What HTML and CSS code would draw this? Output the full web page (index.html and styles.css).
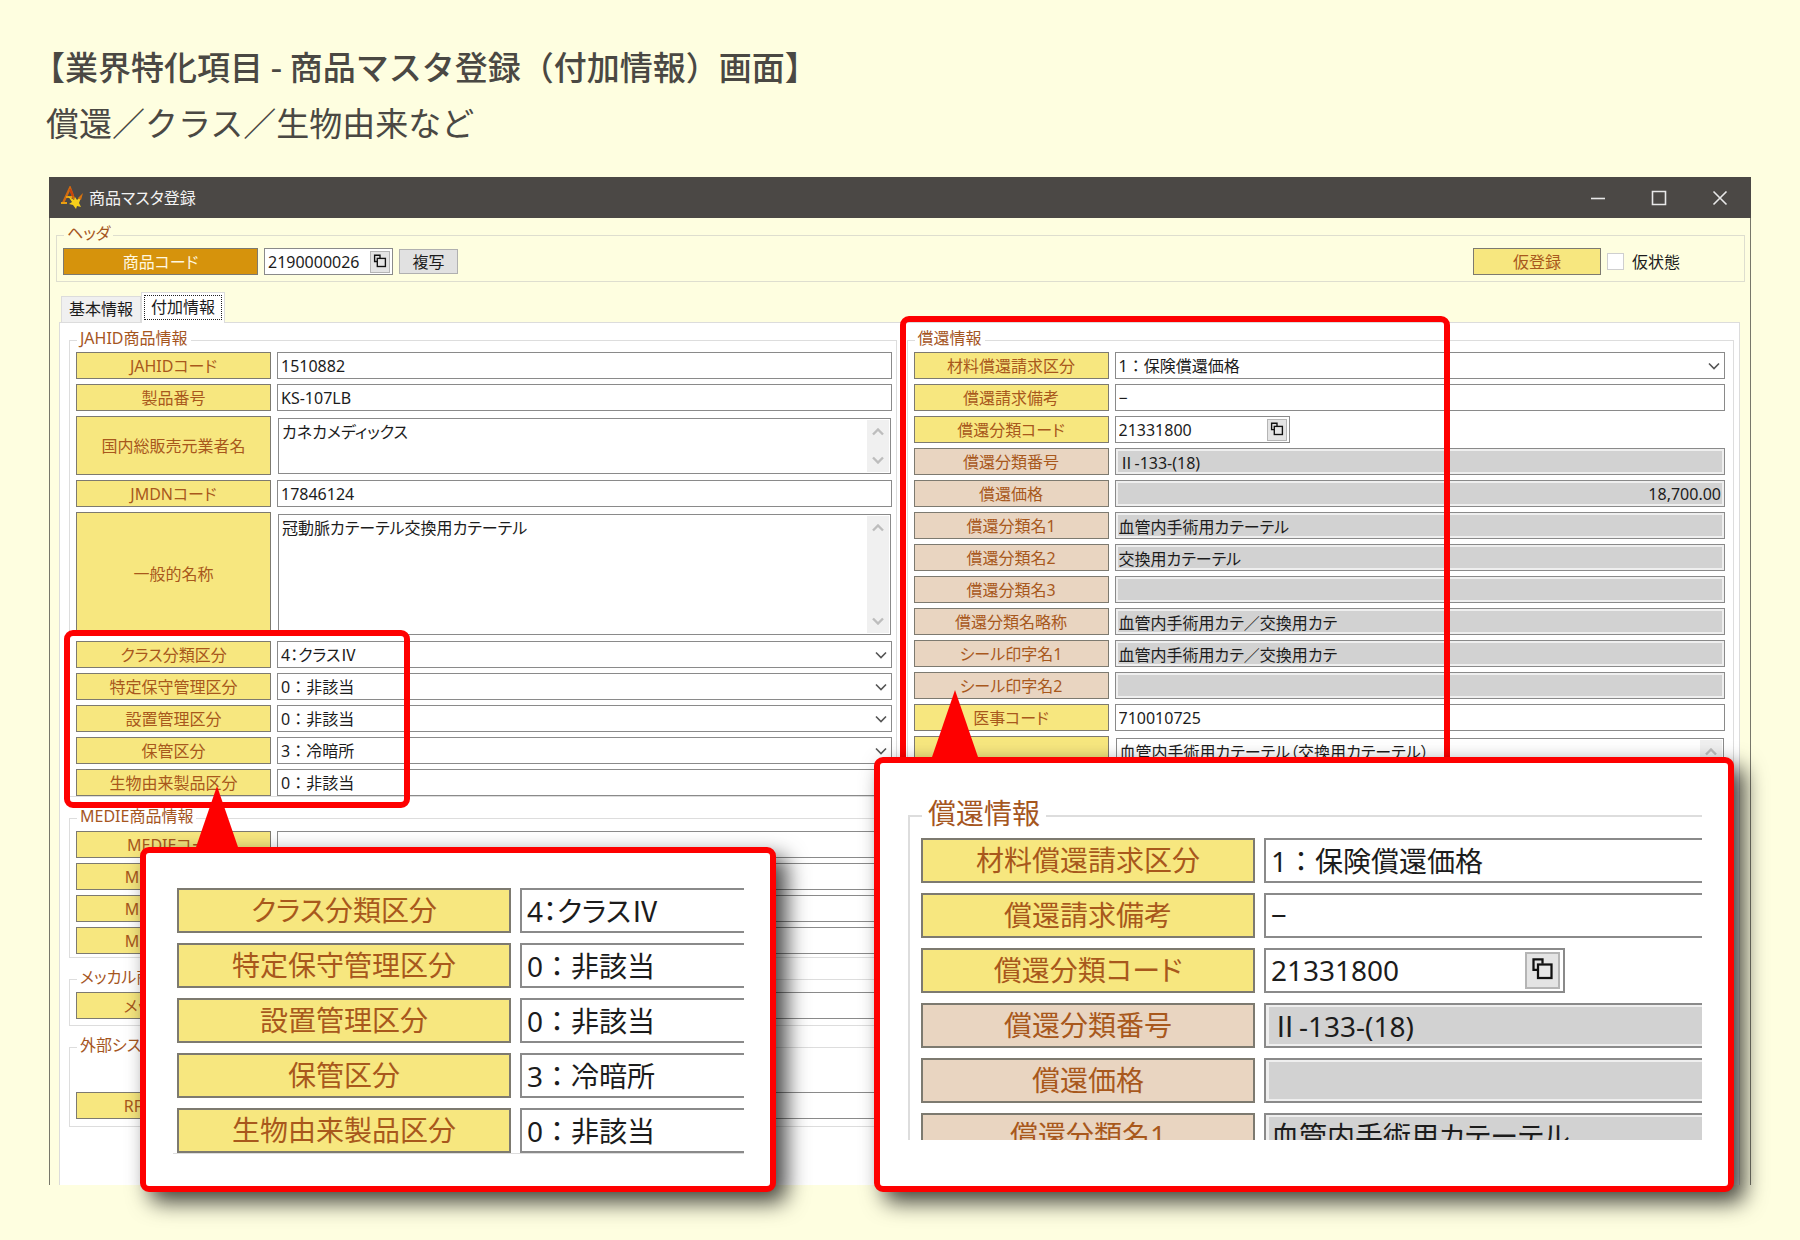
FILE: index.html
```html
<!DOCTYPE html>
<html lang="ja">
<head>
    <meta charset="UTF-8">
    <meta name="viewport" content="width=device-width, initial-scale=1.0">
    <title>商品マスタ登録</title>
    <link rel="stylesheet" href="styles.css">
</head>
<body>

<!-- Shared icons -->
<svg class="defs" width="0" height="0">
    <symbol id="chevron" viewBox="0 0 12 8"><path d="M1 1.5l5 5 5-5" fill="none" stroke="currentColor" stroke-width="1.6"/></symbol>
    <symbol id="chevron-up" viewBox="0 0 12 8"><path d="M1 6.5l5-5 5 5" fill="none" stroke="currentColor" stroke-width="2.4"/></symbol>
    <symbol id="chevron-down" viewBox="0 0 12 8"><path d="M1 1.5l5 5 5-5" fill="none" stroke="currentColor" stroke-width="2.4"/></symbol>
    <symbol id="lookup" viewBox="0 0 20 22"><path d="M4 8.5v-5h6v3M4 8.5v2h3" fill="none" stroke="#111" stroke-width="1.5"/><rect x="7" y="7" width="9" height="9" fill="#e6e6e6" stroke="#111" stroke-width="1.5"/></symbol>
</svg>

<header class="heading">
    <h1>【業界特化項目 - 商品マスタ登録（付加情報）画面】</h1>
    <p>償還／クラス／生物由来など</p>
</header>

<main class="window">
    <div class="titlebar">
        <svg class="app-icon" width="22" height="24" viewBox="0 0 22 24">
            <path d="M2 17L9 2l4 11" fill="none" stroke="#d06a10" stroke-width="2.4"/>
            <path d="M0 17h6M5 11h6" stroke="#e8a012" stroke-width="2.2"/>
            <path d="M9 3l3 7" stroke="#c8420c" stroke-width="2"/>
            <path d="M7 10l6 4 1-3 2 3 5-5-3 8 2 4-4-1-1 3-3-4-4-1 3-2z" fill="#f6cf1a"/>
            <path d="M17 12l5-5-2 7z" fill="#d8720e"/>
        </svg>
        <span class="title">商品マスタ登録</span>
        <div class="window-buttons">
            <button type="button" aria-label="最小化"><svg width="16" height="16" viewBox="0 0 16 16"><path d="M1 8.5h14"/></svg></button>
            <button type="button" aria-label="最大化"><svg width="16" height="16" viewBox="0 0 16 16"><path d="M1.5 1.5h13v13h-13z"/></svg></button>
            <button type="button" aria-label="閉じる"><svg width="16" height="16" viewBox="0 0 16 16"><path d="M1.5 1.5l13 13M14.5 1.5l-13 13"/></svg></button>
        </div>
    </div>

    <div class="window-body">
        <fieldset class="group header-group">
            <legend>ヘッダ</legend>
            <div class="header-row">
                <label class="tag key" for="code">商品コード</label>
                <div class="lookup">
                    <input id="code" type="text" value="2190000026">
                    <button type="button" aria-label="検索"><svg><use href="#lookup"/></svg></button>
                </div>
                <button type="button" class="copy-btn">複写</button>
                <label class="tag temp" for="temp">仮登録</label>
                <input id="temp" class="check" type="checkbox">
                <label class="check-label" for="temp">仮状態</label>
            </div>
        </fieldset>

        <div class="tabs">
            <button type="button" class="tab">基本情報</button>
            <button type="button" class="tab active"><span>付加情報</span></button>
        </div>

        <div class="panel">
            <!-- Left column -->
            <div class="column">
                <fieldset class="group">
                    <legend>JAHID商品情報</legend>
                    <div class="row"><label class="tag" for="jahid">JAHIDコード</label><input id="jahid" type="text" value="1510882"></div>
                    <div class="row"><label class="tag" for="product-no">製品番号</label><input id="product-no" type="text" value="KS-107LB"></div>
                    <div class="row medium">
                        <label class="tag" for="maker">国内総販売元業者名</label>
                        <div class="area">
                            <textarea id="maker">カネカメディックス</textarea>
                            <div class="scroll"><svg><use href="#chevron-up"/></svg><svg><use href="#chevron-down"/></svg></div>
                        </div>
                    </div>
                    <div class="row"><label class="tag" for="jmdn">JMDNコード</label><input id="jmdn" type="text" value="17846124"></div>
                    <div class="row tall">
                        <label class="tag" for="general">一般的名称</label>
                        <div class="area">
                            <textarea id="general">冠動脈カテーテル交換用カテーテル</textarea>
                            <div class="scroll"><svg><use href="#chevron-up"/></svg><svg><use href="#chevron-down"/></svg></div>
                        </div>
                    </div>
                    <div class="row"><label class="tag" for="class">クラス分類区分</label><div class="select kana"><select id="class"><option>4：クラスⅣ</option></select><svg><use href="#chevron"/></svg></div></div>
                    <div class="row"><label class="tag" for="upkeep">特定保守管理区分</label><div class="select"><select id="upkeep"><option>0：非該当</option></select><svg><use href="#chevron"/></svg></div></div>
                    <div class="row"><label class="tag" for="install">設置管理区分</label><div class="select"><select id="install"><option>0：非該当</option></select><svg><use href="#chevron"/></svg></div></div>
                    <div class="row"><label class="tag" for="storage">保管区分</label><div class="select"><select id="storage"><option>3：冷暗所</option></select><svg><use href="#chevron"/></svg></div></div>
                    <div class="row"><label class="tag" for="bio">生物由来製品区分</label><div class="select"><select id="bio"><option>0：非該当</option></select><svg><use href="#chevron"/></svg></div></div>
                </fieldset>

                <fieldset class="group medie">
                    <legend>MEDIE商品情報</legend>
                    <div class="row"><label class="tag" for="medie1">MEDIEコード</label><input id="medie1" type="text"></div>
                    <div class="row"><label class="tag" for="medie2">MEDIE商品名</label><input id="medie2" type="text"></div>
                    <div class="row"><label class="tag" for="medie3">MEDIE規格名</label><input id="medie3" type="text"></div>
                    <div class="row"><label class="tag" for="medie4">MEDIE分類名</label><input id="medie4" type="text"></div>
                </fieldset>

                <fieldset class="group meccul">
                    <legend>メッカル商品情報</legend>
                    <div class="row"><label class="tag" for="meccul">メッカルコード</label><input id="meccul" type="text"></div>
                </fieldset>

                <fieldset class="group external">
                    <legend>外部システム連携</legend>
                    <div class="row"><label class="tag" for="rfid">RFID管理区分</label><input id="rfid" type="text"></div>
                </fieldset>

                <div class="frame frame-class"></div>
            </div>

            <!-- Right column -->
            <div class="column">
                <fieldset class="group refund">
                    <legend>償還情報</legend>
                    <div class="row"><label class="tag" for="claim">材料償還請求区分</label><div class="select"><select id="claim"><option>1：保険償還価格</option></select><svg><use href="#chevron"/></svg></div></div>
                    <div class="row"><label class="tag" for="note">償還請求備考</label><input id="note" type="text" value="−"></div>
                    <div class="row">
                        <label class="tag" for="refund-code">償還分類コード</label>
                        <div class="lookup wide">
                            <input id="refund-code" type="text" value="21331800">
                            <button type="button" aria-label="検索"><svg><use href="#lookup"/></svg></button>
                        </div>
                    </div>
                    <div class="row"><label class="tag fixed" for="refund-no">償還分類番号</label><input id="refund-no" type="text" value="Ⅱ-133-(18)" readonly></div>
                    <div class="row"><label class="tag fixed" for="price">償還価格</label><input id="price" class="number" type="text" value="18,700.00" readonly></div>
                    <div class="row"><label class="tag fixed" for="name1">償還分類名1</label><input id="name1" type="text" value="血管内手術用カテーテル" readonly></div>
                    <div class="row"><label class="tag fixed" for="name2">償還分類名2</label><input id="name2" type="text" value="交換用カテーテル" readonly></div>
                    <div class="row"><label class="tag fixed" for="name3">償還分類名3</label><input id="name3" type="text" readonly></div>
                    <div class="row"><label class="tag fixed" for="short">償還分類名略称</label><input id="short" type="text" value="血管内手術用カテ／交換用カテ" readonly></div>
                    <div class="row"><label class="tag fixed" for="seal1">シール印字名1</label><input id="seal1" type="text" value="血管内手術用カテ／交換用カテ" readonly></div>
                    <div class="row"><label class="tag fixed" for="seal2">シール印字名2</label><input id="seal2" type="text" readonly></div>
                    <div class="row"><label class="tag" for="medical">医事コード</label><input id="medical" type="text" value="710010725"></div>
                    <div class="row tall">
                        <label class="tag" for="medical-name">医事名称</label>
                        <div class="area">
                            <textarea id="medical-name">血管内手術用カテーテル（交換用カテーテル）</textarea>
                            <div class="scroll"><svg><use href="#chevron-up"/></svg><svg><use href="#chevron-down"/></svg></div>
                        </div>
                    </div>
                </fieldset>

                <div class="frame frame-refund"></div>
            </div>
        </div>
    </div>

    <!-- Enlarged callouts -->
    <section class="callout callout-class">
        <div class="crop">
            <div class="row"><label class="tag" for="z-class">クラス分類区分</label><input id="z-class" class="kana" type="text" value="4：クラスⅣ"></div>
            <div class="row"><label class="tag" for="z-upkeep">特定保守管理区分</label><input id="z-upkeep" type="text" value="0：非該当"></div>
            <div class="row"><label class="tag" for="z-install">設置管理区分</label><input id="z-install" type="text" value="0：非該当"></div>
            <div class="row"><label class="tag" for="z-storage">保管区分</label><input id="z-storage" type="text" value="3：冷暗所"></div>
            <div class="row"><label class="tag" for="z-bio">生物由来製品区分</label><input id="z-bio" type="text" value="0：非該当"></div>
        </div>
    </section>

    <section class="callout callout-refund">
        <div class="crop">
            <fieldset class="group">
                <legend>償還情報</legend>
                <div class="row"><label class="tag" for="z-claim">材料償還請求区分</label><input id="z-claim" type="text" value="1：保険償還価格"></div>
                <div class="row"><label class="tag" for="z-note">償還請求備考</label><input id="z-note" type="text" value="−"></div>
                <div class="row">
                    <label class="tag" for="z-code">償還分類コード</label>
                    <div class="lookup">
                        <input id="z-code" type="text" value="21331800">
                        <button type="button" aria-label="検索"><svg><use href="#lookup"/></svg></button>
                    </div>
                </div>
                <div class="row"><label class="tag fixed" for="z-no">償還分類番号</label><input id="z-no" type="text" value="Ⅱ-133-(18)" readonly></div>
                <div class="row"><label class="tag fixed" for="z-price">償還価格</label><input id="z-price" type="text" readonly></div>
                <div class="row"><label class="tag fixed" for="z-name1">償還分類名1</label><input id="z-name1" type="text" value="血管内手術用カテーテル" readonly></div>
            </fieldset>
        </div>
    </section>
</main>

</body>
</html>
```

FILE: styles.css
```css
* {
    box-sizing: border-box;
}

body {
    margin: 0;
    padding: 43px 49px 56px;
    background-color: #fefee0;
    color: #1c1c1c;
    font-family: "Noto Sans", "Noto Sans CJK JP", sans-serif;
    font-size: 16px;
    line-height: 22px;
}

.defs {
    position: absolute;
}

input,
select,
textarea,
button {
    margin: 0;
    border: 0;
    border-radius: 0;
    padding: 0;
    background: none;
    color: inherit;
    font: inherit;
}

/* Heading */
.heading {
    margin-left: -17px;
    color: #4a4843;
    font-family: "Noto Sans CJK JP", sans-serif;
    font-size: 33px;
    line-height: 46px;
}

.heading h1 {
    margin: 0;
    font-size: 33px;
    font-weight: 500;
}

.heading p {
    margin: 10px 0 32px 14px;
}

/* Window */
.window {
    position: relative;
    border: solid #77776a;
    border-width: 0 1px;
}

.titlebar {
    display: flex;
    align-items: center;
    height: 41px;
    margin: 0 -1px;
    padding: 0 23px 0 12px;
    background-color: #4b4845;
    color: #f2f2f2;
}

.title {
    margin-left: 6px;
    font-feature-settings: "palt";
}

.window-buttons {
    display: flex;
    gap: 45px;
    margin-left: auto;
}

.window-buttons button,
.window-buttons svg {
    display: block;
    width: 16px;
    height: 16px;
    fill: none;
    stroke: #e8e8e8;
    stroke-width: 1.6;
}

.window-body {
    padding: 6px 5px 0 6px;
}

/* Groups */
.group {
    min-width: 0;
    margin: 0;
    border: 1px solid #dddddd;
    padding: 1px 4px 0 6px;
}

.group legend {
    margin-left: 1px;
    padding: 0 3px 4px;
    color: #a5561f;
    line-height: 18px;
    font-feature-settings: "palt";
}

.header-group {
    border-color: #dedecf;
    padding: 2px 64px 6px 6px;
}

.header-row {
    display: flex;
    align-items: center;
    gap: 6px;
}

/* Rows */
.row {
    display: grid;
    grid-template-columns: 195px 1fr;
    gap: 6px;
    height: 27px;
    margin-bottom: 5px;
}

.row:last-child {
    margin-bottom: 0;
}

.row.medium {
    height: 59px;
}

.row.tall {
    height: 124px;
}

.tag {
    display: flex;
    align-items: center;
    justify-content: center;
    border: 1px solid #7d7a70;
    background-color: #f7e77f;
    color: #a8581c;
    white-space: nowrap;
    font-feature-settings: "palt";
}

.tag.fixed {
    background-color: #e9d5c1;
}

.tag.key {
    width: 195px;
    height: 27px;
    background-color: #d6930c;
    color: #fff8e0;
}

.tag.temp {
    width: 128px;
    height: 27px;
    margin-left: auto;
}

input[type="text"],
select,
textarea {
    width: 100%;
    min-width: 0;
    height: 100%;
    border: 1px solid #8a8a8a;
    padding: 0 3px;
    background-color: #fff;
}

input[readonly] {
    box-shadow: inset 0 0 0 2px #efefef;
    background-color: #d2d2d2;
    font-feature-settings: "palt";
}

.number {
    text-align: right;
}

.kana {
    font-feature-settings: "palt";
}

.select {
    position: relative;
}

.select select {
    display: block;
    appearance: none;
}

.select svg {
    position: absolute;
    top: 10px;
    right: 5px;
    width: 12px;
    height: 8px;
    color: #555;
    pointer-events: none;
}

.area {
    position: relative;
    padding: 2px 1px 1px;
}

.area textarea {
    display: block;
    padding: 2px 26px 2px 3px;
    overflow: hidden;
    resize: none;
    font-feature-settings: "palt";
}

.scroll {
    position: absolute;
    top: 4px;
    right: 3px;
    bottom: 3px;
    display: flex;
    flex-direction: column;
    align-items: center;
    justify-content: space-between;
    width: 22px;
    padding: 8px 0;
    background-color: #f0f0f0;
    color: #bdbdbd;
}

.scroll svg {
    width: 12px;
    height: 8px;
}

.lookup {
    display: flex;
    align-items: center;
    width: 129px;
    height: 27px;
    border: 1px solid #8a8a8a;
    padding-right: 2px;
    background-color: #fff;
}

.lookup.wide {
    width: 175px;
}

.lookup input[type="text"] {
    flex: 1;
    border: 0;
}

.lookup button {
    width: 20px;
    height: 22px;
    border: 1px solid #b5b5b5;
    background-color: #e4e4e4;
}

.lookup svg {
    display: block;
    width: 100%;
    height: 100%;
}

.copy-btn {
    width: 59px;
    height: 25px;
    border: 1px solid #b0b0b0;
    background-color: #e1e1e1;
}

.check {
    appearance: none;
    width: 17px;
    height: 17px;
    border: 1px solid #cfcfcf;
    background-color: #fff;
}

.check-label {
    margin-left: 2px;
}

/* Tabs */
.tabs {
    display: flex;
    align-items: flex-end;
    height: 31px;
    margin: 10px 0 -1px 5px;
}

.tab {
    height: 27px;
    border: 1px solid #dcdcdc;
    padding: 0 7px 2px;
    background-color: #f0f0f0;
}

.tab.active {
    position: relative;
    height: 31px;
    border-bottom: 0;
    padding: 0 2px 2px;
    background-color: #fff;
}

.tab.active span {
    display: block;
    height: 25px;
    border: 1px dotted #222;
    padding: 0 6px;
}

.panel {
    display: flex;
    gap: 10px;
    margin: 0 5px 0 3px;
    border: solid #dcdcdc;
    border-width: 1px 1px 0;
    padding: 6px 5px 58px 9px;
    background-color: #fff;
}

.column {
    position: relative;
    display: flex;
    flex: 1;
    flex-direction: column;
    gap: 10px;
    min-width: 0;
}

.medie {
    padding-top: 2px;
    padding-bottom: 3px;
}

.meccul {
    padding-top: 2px;
    padding-bottom: 6px;
}

.external {
    padding-top: 34px;
    padding-bottom: 7px;
}

.refund {
    flex: 1;
    padding-right: 8px;
}

/* Red frames */
.frame {
    position: absolute;
    border: 6px solid #fe0000;
    border-radius: 9px;
    pointer-events: none;
}

.frame-class {
    top: 301px;
    left: -5px;
    width: 346px;
    height: 178px;
}

.frame-refund {
    top: -13px;
    left: -7px;
    width: 550px;
    height: 460px;
}

/* Callouts */
.callout {
    position: absolute;
    border: 6px solid #fe0000;
    border-radius: 9px;
    background-color: #fff;
    box-shadow: 10px 10px 22px rgba(0, 0, 0, 0.75);
    font-size: 28px;
    line-height: 38px;
}

.callout::before {
    content: "";
    position: absolute;
    background-color: #fe0000;
    clip-path: polygon(50% 0, 100% 100%, 0 100%);
}

.callout-class {
    top: 670px;
    left: 90px;
    width: 636px;
    height: 345px;
    padding: 35px 26px 0 27px;
}

.callout-class::before {
    top: -67px;
    left: 49px;
    width: 44px;
    height: 64px;
}

.callout-refund {
    top: 580px;
    right: 16px;
    width: 860px;
    height: 435px;
    padding: 34px 26px 0 28px;
}

.callout-refund::before {
    top: -73px;
    left: 51px;
    width: 48px;
    height: 70px;
}

.crop {
    overflow: hidden;
}

.callout .row {
    grid-template-columns: 334px 1fr;
    gap: 9px;
    height: 45px;
    margin-bottom: 10px;
}

.callout .tag {
    border-width: 2px;
    padding-bottom: 1px;
}

.callout input[type="text"] {
    border-width: 2px;
    border-right: 0;
    padding: 0 5px 1px;
}

.callout input[readonly] {
    box-shadow: inset 3px 0 0 #efefef, inset 0 2px 0 #efefef, inset 0 -2px 0 #efefef;
}

.callout-class .crop {
    border-bottom: 1px solid #dddddd;
    padding-left: 4px;
}

.callout-class .row:last-child {
    margin-bottom: 0;
}

.callout-refund .crop {
    height: 343px;
}

.callout .group {
    border-width: 2px 0 0 2px;
    padding: 3px 0 0 11px;
}

.callout legend {
    margin-left: 1px;
    padding: 0 6px 6px;
    line-height: 32px;
}

.callout .lookup {
    width: 301px;
    height: 45px;
    border-width: 2px;
    padding-right: 3px;
}

.callout .lookup input[type="text"] {
    border: 0;
}

.callout .lookup button {
    width: 35px;
    height: 37px;
    border-width: 2px;
}
```
